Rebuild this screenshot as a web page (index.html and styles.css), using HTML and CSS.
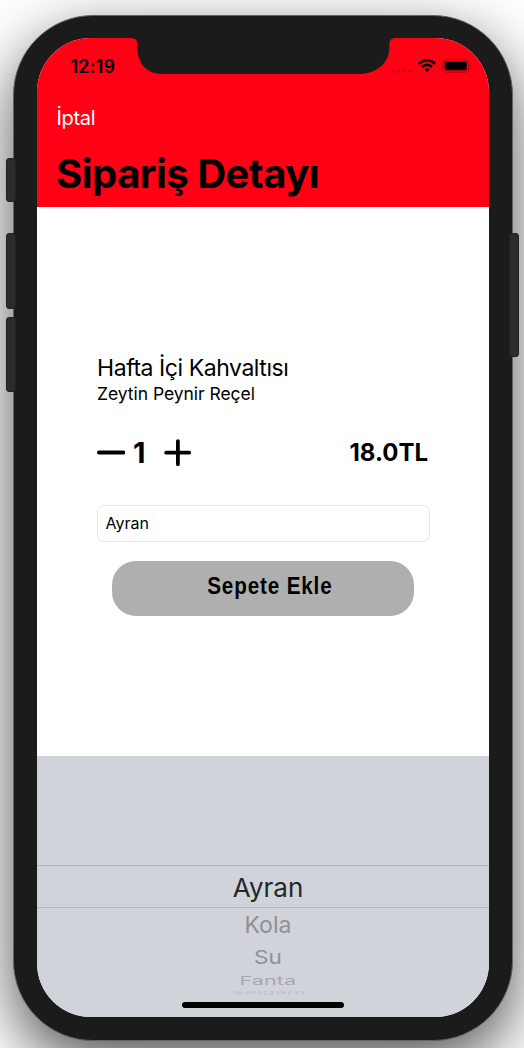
FILE: index.html
```html
<!DOCTYPE html>
<html lang="tr">
<head>
<meta charset="utf-8">
<title>Sipariş Detayı</title>
<link rel="stylesheet" href="styles.css">
</head>
<body>
<div class="phone">
  <i class="key key-mute"></i><i class="key key-up"></i><i class="key key-down"></i><i class="key key-power"></i>
  <main class="screen">
    <svg class="notch" width="262" height="37" viewBox="0 0 262 37"><path fill="#1b1b1b" d="M0 0V.2C4.500.5 5.500 3 5.500 7V10C5.500 26 15 36 31 36H227C243 36 257.300 26 257.300 10V7C257.300 3 258.500.5 262 .2V0Z"/></svg>
    <header class="header">
      <div class="status">
        <span class="time">12:19</span>
        <span class="status-icons">
          <svg class="dots" width="22" height="4" viewBox="0 0 22 4"><g fill="#c80012"><circle cx="2" cy="2" r="1.700"/><circle cx="7.600" cy="2" r="1.700"/><circle cx="13.200" cy="2" r="1.700"/><circle cx="18.800" cy="2" r="1.700"/></g></svg>
          <svg class="wifi" width="18" height="13" viewBox="0 0 18 13"><g fill="none" stroke="#000" stroke-width="2.500"><path d="M.9 4.700Q9-2.100 17.100 4.700"/><path d="M3.900 7.900Q9 3.600 14.100 7.900"/></g><path d="M6.400 10.300Q9 8 11.600 10.300L9 12.900Z"/></svg>
          <svg class="battery" width="30" height="14" viewBox="0 0 30 14"><rect x=".7" y=".7" width="26" height="12.400" rx="3.500" fill="none" stroke="#a5000c"/><rect x="2.700" y="2.500" width="22" height="8.800" rx="1.700"/><path d="M28 4.800Q29.600 7 28 9Z" fill="#a5000c"/></svg>
        </span>
      </div>
      <a class="cancel">İptal</a>
      <h1 class="title">Sipariş Detayı</h1>
    </header>
    <section class="detail">
      <h2 class="name">Hafta İçi Kahvaltısı</h2>
      <p class="contents">Zeytin Peynir Reçel</p>
      <div class="row">
        <svg width="28" height="28" viewBox="0 0 28 28"><path class="stroke" d="M1.900 14.500H26.500"/></svg>
        <span class="count">1</span>
        <svg width="28" height="28" viewBox="0 0 28 28"><path class="stroke" d="M2.200 14.700H25.200M13.900 3.200V26.200"/></svg>
        <span class="price">18.0TL</span>
      </div>
      <div class="field">Ayran</div>
      <div class="button"><span>Sepete Ekle</span></div>
    </section>
    <section class="picker">
      <div class="option selected"><span>Ayran</span></div>
      <div class="option second"><span>Kola</span></div>
      <div class="option third"><span>Su</span></div>
      <div class="option fourth"><span>Fanta</span></div>
      <div class="option fifth"><span>Şalgam</span></div>
    </section>
    <i class="home"></i>
  </main>
</div>
</body>
</html>
```
FILE: styles.css
```css
* { box-sizing: border-box; }
body {
  margin: 0;
  width: 524px;
  height: 1048px;
  overflow: hidden;
  padding: 15px 0 0 13px;
  background: #fff;
  color: #000;
  font-family: Inter, "Liberation Sans", sans-serif;
}
h1, h2, p { margin: 0; font-weight: 400; }
svg { display: block; flex: none; }

.phone {
  position: relative;
  width: 500px;
  height: 1026px;
  padding: 22px 23px;
  border: 1px solid #626464;
  border-radius: 80px;
  background: #1b1b1b;
  box-shadow: 0 22px 62px rgba(0, 0, 0, .68);
}
.key {
  position: absolute;
  width: 10px;
  background: #2c2c2c;
  border: 1px solid #222;
  border-radius: 3px;
}
.key-mute { left: -8px; top: 142px; height: 44px; }
.key-up { left: -8px; top: 217px; height: 76px; }
.key-down { left: -8px; top: 301px; height: 75px; }
.key-power { right: -7px; top: 217px; height: 124px; }

.screen {
  position: relative;
  display: flex;
  flex-direction: column;
  width: 452px;
  height: 979px;
  overflow: hidden;
  border-radius: 54px;
  background: #fff;
}
.notch { position: absolute; left: 95px; top: 0; }

.header { height: 169px; background: #ff0014; }
.status {
  display: flex;
  justify-content: space-between;
  height: 68px;
  padding: 17px 17px 0 33.500px;
}
.time { font-size: 18px; line-height: 23px; font-weight: 600; letter-spacing: .2px; }
.status-icons { display: flex; }
.dots { margin: 13.500px 5px 0 0; }
.wifi { margin: 4px 6.500px 0 0; }
.battery { margin-top: 4px; }
.cancel {
  display: block;
  padding-left: 19.500px;
  color: #fff;
  font-size: 20px;
  line-height: 24px;
  letter-spacing: -.3px;
}
.title {
  padding: 20px 0 0 19px;
  font-size: 40px;
  line-height: 48px;
  font-weight: 700;
  letter-spacing: -.5px;
}

.detail { height: 549px; padding: 147px 59px 0 60px; }
.name { font-size: 23px; line-height: 28px; letter-spacing: -.44px; white-space: nowrap; }
.contents { font-size: 17.500px; line-height: 24px; letter-spacing: -.04px; }
.row { display: flex; align-items: center; height: 36px; margin-top: 28px; }
.stroke { fill: none; stroke: #000; stroke-width: 3.800; stroke-linecap: round; }
.count { width: 39px; padding: 1px 0 0 8px; font-size: 29px; font-weight: 700; }
.price { margin-left: auto; padding: 1px 2px 0 0; font-size: 24px; font-weight: 700; }
.field {
  height: 37px;
  margin-top: 35px;
  padding-left: 7.500px;
  border: 1px solid #e6e6e6;
  border-radius: 7px;
  font-size: 16px;
  line-height: 34px;
}
.button {
  width: 302px;
  height: 55px;
  margin: 19px 0 0 15px;
  padding-left: 13px;
  border-radius: 24px;
  background: #afafaf;
  font: bold 24px/49px "Liberation Sans", sans-serif;
  text-align: center;
}
.button span { display: inline-block; transform: scaleX(.86); letter-spacing: 1px; }

.picker { flex: 1; padding-top: 109px; background: #d0d3d9; }
.option { padding-left: 10px; text-align: center; color: #8e9196; }
.option span { display: inline-block; }
.selected {
  height: 43px;
  border: solid #b5b8bd;
  border-width: 1px 0;
  color: #262729;
  font-size: 26px;
  line-height: 43px;
}
.second { height: 34px; font-size: 23px; line-height: 34px; }
.third { height: 31px; font-size: 21px; line-height: 31px; }
.third span { transform: scale(1.08, .88); }
.fourth { height: 16px; font-size: 19px; line-height: 16px; color: #a6a9ae; }
.fourth span { transform: scale(1.14, .6); }
.fifth { height: 8px; font-size: 18px; line-height: 8px; color: #bfc2c7; }
.fifth span { transform: scale(1.18, .22); }
.home {
  position: absolute;
  left: 145px;
  bottom: 9.500px;
  width: 162px;
  height: 6px;
  border-radius: 3px;
  background: #000;
}
```
